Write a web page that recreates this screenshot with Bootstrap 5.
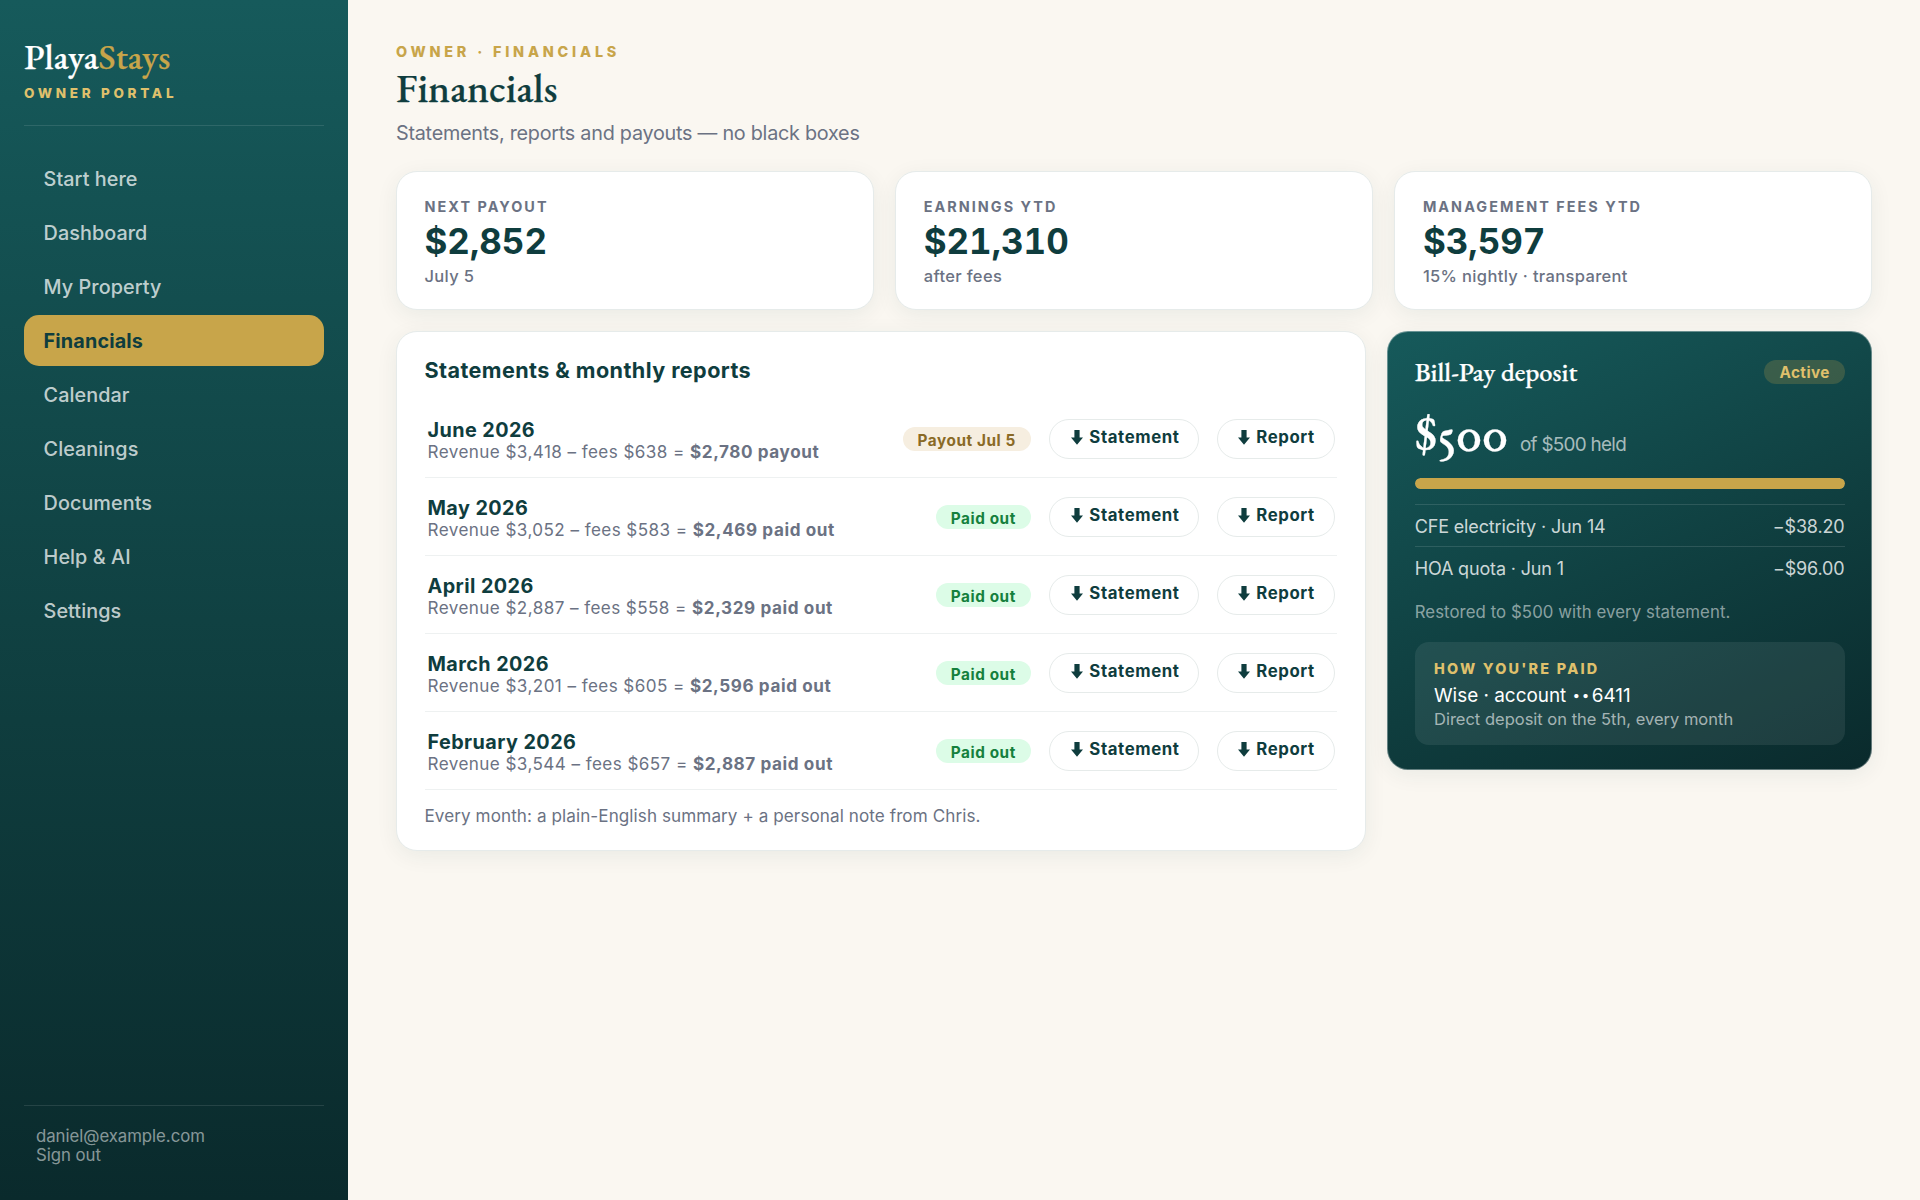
<!DOCTYPE html>
<html lang="en">
<head>
<meta charset="utf-8">
<title>PlayaStays · Financials</title>
<link rel="stylesheet" href="https://cdn.jsdelivr.net/npm/bootstrap@5.3.0/dist/css/bootstrap.min.css">
<style>
:root{--ink:#0f3d3e;--gold:#c8a54a;--gold-soft:#dfc06c;--muted-ink:#6b7283}
body{font-family:Inter,"Liberation Sans",sans-serif;background:#faf7f1;color:var(--ink);height:1200px;overflow:hidden}
.serif{font-family:"EB Garamond","Liberation Serif",serif;font-weight:500;font-variant-numeric:oldstyle-nums proportional-nums;-webkit-text-stroke:.25px currentColor}
.side{width:348px;padding:36px 24px 35px;background:linear-gradient(180deg,#165a5b 0%,#0f3d3e 60%,#0a2a2c 100%)}
.brand{border-bottom:1.2px solid rgba(255,255,255,.11);padding-bottom:22px;margin-bottom:27px}
.brand-name{font-size:36px;line-height:42px;color:#fff}
.brand-name span{color:var(--gold)}
.brand-sub{font-size:13.5px;line-height:20px;margin-top:5px;font-weight:800;letter-spacing:3.7px;color:var(--gold-soft)}
.side .nav{gap:3px}
.side .nav-link{height:51px;line-height:51px;padding:1px 20px 0 19.6px;font-size:19.8px;font-weight:500;color:rgba(255,255,255,.74);border-radius:15px;letter-spacing:.06px}
.side .nav-link.active{background:var(--gold);color:var(--ink);font-weight:700;letter-spacing:.15px}
.side-foot{border-top:1.2px solid rgba(255,255,255,.11);padding:21px 12px 0;font-size:16.8px;line-height:19px;letter-spacing:-.05px;color:rgba(255,255,255,.52)}
.page{padding:41.5px 48px 0}
.eyebrow{font-size:14.4px;line-height:20px;font-weight:800;letter-spacing:3.8px;color:var(--gold)}
h1.serif{font-size:40.8px;line-height:48px;margin:2px 0 7px}
.sub{font-size:19.8px;line-height:28px;letter-spacing:-.25px;color:var(--muted-ink);margin-bottom:24px}
.tiles{display:grid;grid-template-columns:repeat(3,1fr);gap:21.6px;margin-bottom:21px}
.split{display:grid;grid-template-columns:2fr 1fr;gap:21.6px;align-items:start}
.panel{background:#fff;border:1.3px solid #e6ebea;border-radius:21px;box-shadow:0 5px 22px rgba(15,61,62,.065)}
.tile{height:139px;padding:25px 27.5px 0}
.t-label{font-size:14.4px;line-height:20px;font-weight:700;letter-spacing:2.04px;color:var(--muted-ink)}
.t-value{font-size:34.9px;line-height:42px;font-weight:700;margin:3px 0 2.5px;font-variant-numeric:tabular-nums}
.t-note{font-size:16.5px;line-height:24px;font-weight:500;letter-spacing:.34px;color:var(--muted-ink)}
.statements{height:520px;padding:24.5px 27.5px 0}
.statements h2{font-size:21.6px;line-height:28px;font-weight:700;letter-spacing:.42px;margin:0 0 16px}
.st-row{height:78px;border-bottom:1.2px solid #eef1f1;padding:0 2.6px 0 3px;gap:18px}
.month{font-size:19.8px;line-height:22px;font-weight:700;letter-spacing:.43px;padding-top:3px}
.calc{font-size:17.1px;line-height:21px;letter-spacing:.42px;color:var(--muted-ink)}
.calc b{font-weight:700;letter-spacing:.6px}
.tag{height:24px;border-radius:12px;padding:1px 14.6px 0 15px;font-size:15.3px;line-height:25px;font-weight:700;letter-spacing:.58px}
.tag-paid{background:#dcfce7;color:#15803d}
.tag-due{background:#f6eee0;color:#8a6a26}
.dl{height:40px;border:1.2px solid #e6ebea;border-radius:20px;padding:0 18.7px 0 19.8px;font-size:16.8px;font-weight:700;letter-spacing:.6px;color:var(--ink);background:#fff;gap:6.2px}
.dl-wide{padding-left:21px;gap:6.8px}
.dl svg{display:block;margin-bottom:2px}
.dl span{margin-bottom:1px}
.st-foot{font-size:17.1px;line-height:24px;letter-spacing:.08px;margin-top:13.5px;color:var(--muted-ink)}
.deposit{color:#fff;border:1px solid rgba(230,235,234,.4);border-radius:21px;height:439px;padding:22px 26.5px 0;background:linear-gradient(155deg,#165a5b 0%,#0f3d3e 60%,#0a2a2c 100%) border-box;box-shadow:0 5px 22px rgba(15,61,62,.065)}
.dep-title{font-size:26.5px;line-height:36px}
.tag-live{background:rgba(200,165,74,.22);color:var(--gold-soft);line-height:24px;letter-spacing:.45px}
.dep-amt{height:52px;margin:17px 0 19px;gap:12px}
.dep-num{font-size:51px;line-height:52px}
.dep-of{font-size:18.9px;letter-spacing:-.72px;color:rgba(255,255,255,.64)}
.meter{height:11px;border-radius:6px;background:rgba(255,255,255,.15);--bs-progress-bar-bg:var(--gold);margin-bottom:15.5px}
.dep-line{height:42px;border-top:1.2px solid rgba(255,255,255,.12);font-size:18px;letter-spacing:-.15px;color:rgba(255,255,255,.8);padding-top:2px}
.dep-note{font-size:16.8px;line-height:24px;letter-spacing:.07px;color:rgba(255,255,255,.52);margin:12px 0 18px}
.paid{height:103px;border-radius:14px;background:rgba(255,255,255,.08);padding:16px 19.3px 0}
.paid-h{font-size:14.4px;line-height:22px;font-weight:800;letter-spacing:2.25px;color:var(--gold-soft)}
.paid-acct{font-size:18.9px;line-height:26px;margin:3px 0 -3px}
.paid-acct span{font-size:13.5px;letter-spacing:1.5px;margin:0 1px;position:relative;top:-2px}
.paid-sub{font-size:16.5px;line-height:24px;color:rgba(255,255,255,.6)}
</style>
</head>
<body class="d-flex">
<svg class="d-none"><symbol id="down" viewBox="0 0 12 15"><path d="M3.4 0h5.2v7.6H12L6 14.8 0 7.6h3.4z" fill="currentColor"/></symbol></svg>
<aside class="side d-flex flex-column flex-shrink-0">
  <div class="brand"><div class="brand-name serif">Playa<span>Stays</span></div><div class="brand-sub">OWNER PORTAL</div></div>
  <nav class="nav flex-column">
    <a class="nav-link">Start here</a><a class="nav-link">Dashboard</a><a class="nav-link">My Property</a><a class="nav-link active">Financials</a><a class="nav-link">Calendar</a><a class="nav-link">Cleanings</a><a class="nav-link">Documents</a><a class="nav-link">Help &amp; AI</a><a class="nav-link">Settings</a>
  </nav>
  <div class="side-foot mt-auto"><div>daniel@example.com</div><div>Sign out</div></div>
</aside>
<main class="page flex-grow-1">
  <div class="eyebrow">OWNER · FINANCIALS</div>
  <h1 class="serif">Financials</h1>
  <div class="sub">Statements, reports and payouts — no black boxes</div>
  <section class="tiles">
    <div class="panel tile"><div class="t-label">NEXT PAYOUT</div><div class="t-value">$2,852</div><div class="t-note">July 5</div></div>
    <div class="panel tile"><div class="t-label">EARNINGS YTD</div><div class="t-value">$21,310</div><div class="t-note">after fees</div></div>
    <div class="panel tile"><div class="t-label">MANAGEMENT FEES YTD</div><div class="t-value">$3,597</div><div class="t-note">15% nightly · transparent</div></div>
  </section>
  <div class="split">
    <section class="panel statements">
      <h2>Statements &amp; monthly reports</h2>
      <div class="st-row d-flex align-items-center"><div class="me-auto"><div class="month">June 2026</div><div class="calc">Revenue $3,418 – fees $638 = <b>$2,780 payout</b></div></div><span class="tag tag-due">Payout Jul 5</span><button class="dl dl-wide d-flex align-items-center"><svg width="12" height="15"><use href="#down"/></svg><span>Statement</span></button><button class="dl d-flex align-items-center"><svg width="12" height="15"><use href="#down"/></svg><span>Report</span></button></div>
      <div class="st-row d-flex align-items-center"><div class="me-auto"><div class="month">May 2026</div><div class="calc">Revenue $3,052 – fees $583 = <b>$2,469 paid out</b></div></div><span class="tag tag-paid">Paid out</span><button class="dl dl-wide d-flex align-items-center"><svg width="12" height="15"><use href="#down"/></svg><span>Statement</span></button><button class="dl d-flex align-items-center"><svg width="12" height="15"><use href="#down"/></svg><span>Report</span></button></div>
      <div class="st-row d-flex align-items-center"><div class="me-auto"><div class="month">April 2026</div><div class="calc">Revenue $2,887 – fees $558 = <b>$2,329 paid out</b></div></div><span class="tag tag-paid">Paid out</span><button class="dl dl-wide d-flex align-items-center"><svg width="12" height="15"><use href="#down"/></svg><span>Statement</span></button><button class="dl d-flex align-items-center"><svg width="12" height="15"><use href="#down"/></svg><span>Report</span></button></div>
      <div class="st-row d-flex align-items-center"><div class="me-auto"><div class="month">March 2026</div><div class="calc">Revenue $3,201 – fees $605 = <b>$2,596 paid out</b></div></div><span class="tag tag-paid">Paid out</span><button class="dl dl-wide d-flex align-items-center"><svg width="12" height="15"><use href="#down"/></svg><span>Statement</span></button><button class="dl d-flex align-items-center"><svg width="12" height="15"><use href="#down"/></svg><span>Report</span></button></div>
      <div class="st-row d-flex align-items-center"><div class="me-auto"><div class="month">February 2026</div><div class="calc">Revenue $3,544 – fees $657 = <b>$2,887 paid out</b></div></div><span class="tag tag-paid">Paid out</span><button class="dl dl-wide d-flex align-items-center"><svg width="12" height="15"><use href="#down"/></svg><span>Statement</span></button><button class="dl d-flex align-items-center"><svg width="12" height="15"><use href="#down"/></svg><span>Report</span></button></div>
      <div class="st-foot">Every month: a plain-English summary + a personal note from Chris.</div>
    </section>
    <section class="deposit">
      <div class="d-flex justify-content-between align-items-center"><div class="dep-title serif">Bill-Pay deposit</div><span class="tag tag-live">Active</span></div>
      <div class="dep-amt d-flex align-items-baseline"><div class="dep-num serif">$500</div><div class="dep-of">of $500 held</div></div>
      <div class="progress meter"><div class="progress-bar w-100 rounded-pill"></div></div>
      <div class="dep-line d-flex justify-content-between align-items-center"><span>CFE electricity · Jun 14</span><span>−$38.20</span></div>
      <div class="dep-line d-flex justify-content-between align-items-center"><span>HOA quota · Jun 1</span><span>−$96.00</span></div>
      <div class="dep-note">Restored to $500 with every statement.</div>
      <div class="paid"><div class="paid-h">HOW YOU'RE PAID</div><div class="paid-acct">Wise · account <span>••</span>6411</div><div class="paid-sub">Direct deposit on the 5th, every month</div></div>
    </section>
  </div>
</main>
<script src="https://cdn.jsdelivr.net/npm/bootstrap@5.3.0/dist/js/bootstrap.bundle.min.js"></script>
</body>
</html>
